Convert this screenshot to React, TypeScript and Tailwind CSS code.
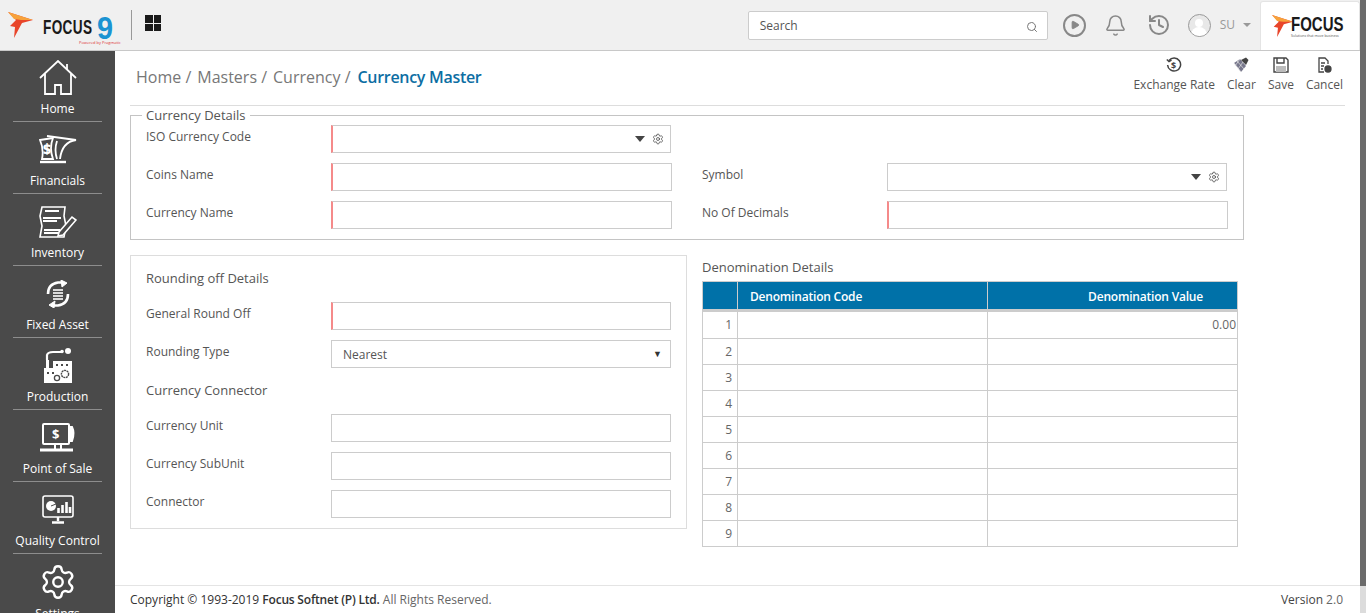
import { Bell, History, Search, Settings, Play } from "lucide-react";

const font = "font-['Open_Sans','Noto_Sans',sans-serif]";

function Logo({ className }: { className?: string }) {
  return (
    <svg viewBox="0 0 26 28" className={className}>
      <path d="M0 1 L25 9 L14 12 L6 27 L7 16 L2 15 L8 9 Z" fill="#e8452a" />
      <path d="M0 1 L25 9 L13 9 L6 8 Z" fill="#f7a23b" />
    </svg>
  );
}

function HomeIcon() {
  return (
    <svg viewBox="0 0 38 36" className="w-[38px] h-[36px]" fill="none" stroke="#fff" strokeWidth="1.8">
      <path d="M1 18 L19 1 L37 18" />
      <path d="M6 14 V34 H16 V25 H22 V34 H32 V14" />
      <path d="M28 4 V10" />
    </svg>
  );
}

function FinancialsIcon() {
  return (
    <svg viewBox="0 0 38 30" className="w-[38px] h-[30px]" fill="none" stroke="#fff" strokeWidth="1.8">
      <path d="M1 5 L14 3 Q10 13 14 24 H3 Q5 14 1 5 Z" />
      <path d="M8 1 L37 5 Q23 7 21 24" />
      <path d="M18 6 Q15 15 18 24" />
      <path d="M1 27 H27" strokeWidth="2.4" />
      <text x="4" y="19" fontSize="14" fontWeight="800" fill="#fff" stroke="none" fontFamily="Open Sans">$</text>
    </svg>
  );
}

function InventoryIcon() {
  return (
    <svg viewBox="0 0 38 32" className="w-[38px] h-[32px]" fill="none" stroke="#fff" strokeWidth="1.6">
      <path d="M3 1 H26 L25 10 L27 20 L25 31 H1 L3 20 L1 10 Z" />
      <path d="M6 5 H20 M4 12 H22 M4 15 H18 M5 24 H21 M5 27 H21" strokeWidth="2" />
      <path d="M20 26 L33 11 L37 14 L24 29 L19 30 Z" fill="#4a4a4a" />
    </svg>
  );
}

function FixedAssetIcon() {
  return (
    <svg viewBox="0 0 24 28" className="w-[24px] h-[28px]" fill="none" stroke="#fff" strokeWidth="2.6">
      <path d="M2 14 Q2 4 12 2.5 L17 2.5" />
      <path d="M15 0 L21 3 L16 7 Z" fill="#fff" strokeWidth="1" />
      <path d="M22 14 Q22 24 12 25.5 L7 25.5" />
      <path d="M9 21 L3 25 L8 28 Z" fill="#fff" strokeWidth="1" />
      <path d="M7 10 H17 M7 13 H17 M7 16 H17 M7 19 H17" strokeWidth="2" stroke="#d8d8d8" />
    </svg>
  );
}

function ProductionIcon() {
  return (
    <svg viewBox="0 0 30 36" className="w-[30px] h-[36px]" fill="none" stroke="#fff" strokeWidth="1.6">
      <path d="M1 20 H3 V12 H6 V20 H10 V13 H29 V35 H1 Z" fill="#fff" stroke="none" />
      <path d="M4 12 V7 Q5 4 10 4 H18" strokeWidth="2.2" />
      <circle cx="19" cy="3.5" r="1.8" fill="#fff" stroke="none" />
      <circle cx="25" cy="3" r="3" fill="#fff" stroke="none" />
      <path d="M13 17 H15 M18 17 H20 M23 17 H25 M4 25 H6 M9 25 H11" stroke="#4a4a4a" strokeWidth="2" />
      <circle cx="14" cy="30" r="2.6" stroke="#4a4a4a" strokeWidth="1.3" />
      <circle cx="22" cy="26" r="3.6" stroke="#4a4a4a" strokeWidth="1.4" strokeDasharray="2 0.6" />
    </svg>
  );
}

function PosIcon() {
  return (
    <svg viewBox="0 0 38 30" className="w-[38px] h-[30px]" fill="none" stroke="#fff" strokeWidth="2">
      <rect x="4" y="1" width="26" height="20" rx="1" />
      <path d="M30 4 H33 Q36 10 33 18 H30" fill="#fff" />
      <path d="M16 21 V26 M22 21 V26" />
      <path d="M1 27 H34" strokeWidth="3" />
      <text x="13" y="16" fontSize="13" fontWeight="700" fill="#fff" stroke="none" fontFamily="Open Sans">$</text>
    </svg>
  );
}

function QualityIcon() {
  return (
    <svg viewBox="0 0 32 29" className="w-[32px] h-[29px]" fill="none" stroke="#fff" strokeWidth="1.6">
      <rect x="1" y="1" width="30" height="21" rx="2" />
      <circle cx="9" cy="11" r="5" fill="#fff" stroke="none" />
      <path d="M9 11 L14 9" stroke="#4a4a4a" strokeWidth="1" />
      <path d="M16.5 18 V13 M20.5 18 V10 M24.5 18 V7 M28 18 V12" strokeWidth="2.6" />
      <path d="M16 22 V26 M10 27.5 H22" strokeWidth="2.4" />
    </svg>
  );
}

const navItems = [
  { label: "Home", icon: <HomeIcon /> },
  { label: "Financials", icon: <FinancialsIcon /> },
  { label: "Inventory", icon: <InventoryIcon /> },
  { label: "Fixed Asset", icon: <FixedAssetIcon /> },
  { label: "Production", icon: <ProductionIcon /> },
  { label: "Point of Sale", icon: <PosIcon /> },
  { label: "Quality Control", icon: <QualityIcon /> },
  { label: "Settings", icon: <Settings className="w-[38px] h-[38px] text-white" strokeWidth={1.5} /> },
];

function Label({ children }: { children: string }) {
  return <div className="w-[185px] shrink-0 mt-[3px] text-[12px] leading-[17px] text-[#555] self-start">{children}</div>;
}

function Field({ required, w = "w-[341px]", picker }: { required?: boolean; w?: string; picker?: boolean }) {
  return (
    <div
      className={`${w} h-[28px] bg-white border border-[#ccc] flex items-center justify-end pr-[6px] gap-[7px] ${required ? "border-l-2 border-l-[#f58a8a]" : ""}`}
    >
      {picker && (
        <>
          <div className="w-0 h-0 border-l-[5.5px] border-r-[5.5px] border-t-[6px] border-l-transparent border-r-transparent border-t-[#444]" />
          <Settings className="w-[12px] h-[12px] text-[#444]" strokeWidth={1.5} />
        </>
      )}
    </div>
  );
}

function Toolbar() {
  const cls = "w-[16px] h-[16px] text-[#444]";
  return (
    <div className="flex gap-[12px] text-[12px] leading-[16px] text-[#555] pr-[2px]">
      <div className="flex flex-col items-center gap-[4px]">
        <svg viewBox="0 0 16 16" className={cls} fill="none" stroke="currentColor" strokeWidth="1.5">
          <path d="M3 3.5 A6.5 6.5 0 1 1 1.6 8" />
          <path d="M0.8 2.5 L3 4.5 L5.5 3" />
          <text x="5" y="11.5" fontSize="9" fontWeight="700" fill="currentColor" stroke="none" fontFamily="Open Sans">$</text>
        </svg>
        <span>Exchange Rate</span>
      </div>
      <div className="flex flex-col items-center gap-[4px]">
        <svg viewBox="0 0 16 16" className={cls}>
          <path d="M1 6 L7 2 L13 9 L8 15 Z" fill="#77778c" />
          <path d="M1 6 L8 15 M4 4 L11 12 M7 2 L2 9 M10 5 L5 12" stroke="#e4e4e4" strokeWidth="0.7" />
          <path d="M8 3 L13 0.5 L15.5 3 L13 8 Z" fill="#444" />
        </svg>
        <span>Clear</span>
      </div>
      <div className="flex flex-col items-center gap-[4px]">
        <svg viewBox="0 0 16 16" className={cls} fill="none" stroke="currentColor" strokeWidth="1.4">
          <path d="M1 1 H13 L15 3 V15 H1 Z" />
          <path d="M4 1 V6 H11 V1" />
          <path d="M3 9 H13 V15 H3 Z" fill="#bbb" stroke="none" />
        </svg>
        <span>Save</span>
      </div>
      <div className="flex flex-col items-center gap-[4px]">
        <svg viewBox="0 0 16 16" className={cls} fill="none" stroke="currentColor" strokeWidth="1.3">
          <path d="M8 15 H3 V1 H9 L12 4 V7" />
          <path d="M5 6 H9 M5 9 H8 M5 12 H7" />
          <circle cx="12" cy="12" r="3" fill="currentColor" />
        </svg>
        <span>Cancel</span>
      </div>
    </div>
  );
}

export default function App() {
  return (
    <div className={`${font} w-[1366px] h-[613px] overflow-hidden flex bg-white`}>
      <div className="w-[1360px] h-full flex flex-col">
        {/* Top bar */}
        <header className="h-[51px] shrink-0 bg-[#f0f0f0] border-b border-[#c8c8c8] flex items-center">
          <Logo className="w-[26px] h-[28px] ml-[8px]" />
          <div className="ml-[9px] w-[88px] h-[40px] relative flex items-center">
            <span className="mt-[4px] font-['Liberation_Sans',sans-serif] font-bold text-[20px] leading-none tracking-[0.5px] text-[#1a1a1a] scale-x-[0.68] origin-left inline-block w-[54px]">FOCUS</span>
            <span className="mt-[6px] h-[24px] font-['Liberation_Sans',sans-serif] text-[32px] leading-[24px] font-bold text-[#1b93d2] scale-x-90 origin-left">9</span>
            <span className="absolute left-[36px] top-[35px] text-[4px] leading-[5px] text-[#d33] whitespace-nowrap">Powered by Pragmatic</span>
          </div>
          <div className="w-px h-[30px] bg-[#999]" />
          <div className="ml-[13px] grid grid-cols-2 gap-[1px] w-[16px] mb-[4px]">
            <div className="h-[7.5px] bg-[#1a1a1a]" />
            <div className="h-[7.5px] bg-[#1a1a1a]" />
            <div className="h-[7.5px] bg-[#1a1a1a]" />
            <div className="h-[7.5px] bg-[#1a1a1a]" />
          </div>
          <div className="ml-auto flex items-center">
            <div className="w-[300px] h-[29px] bg-white border border-[#ccc] rounded-[2px] flex items-center justify-between pl-[11px] pr-[9px] text-[12px] text-[#555]">
              <span className="mt-[1px]">Search</span>
              <Search className="w-[12px] h-[12px] text-[#777] mt-[3px]" />
            </div>
            <div className="ml-[15px] w-[23px] h-[23px] rounded-full border-2 border-[#888] flex items-center justify-center">
              <Play className="w-[10px] h-[10px] ml-[1px] text-[#888] fill-[#888]" />
            </div>
            <Bell className="ml-[18px] w-[23px] h-[23px] text-[#888]" strokeWidth={1.6} />
            <History className="ml-[20px] w-[24px] h-[24px] text-[#888]" strokeWidth={2} />
            <div className="ml-[17px] w-[23px] h-[23px] rounded-full border border-[#999] bg-[#e8e8e8] overflow-hidden flex flex-col items-center">
              <div className="mt-[4px] w-[8px] h-[10px] rounded-full bg-white" />
              <div className="w-[16px] h-[10px] rounded-t-full bg-white" />
            </div>
            <span className="ml-[9px] text-[12px] text-[#999]">SU</span>
            <div className="ml-[8px] w-0 h-0 border-l-[4px] border-r-[4px] border-t-[4px] border-l-transparent border-r-transparent border-t-[#999]" />
            <div className="ml-[9px] w-[100px] h-[49px] mt-[1px] bg-white rounded-t-[3px] border border-b-0 border-[#e4e4e4] flex items-center pl-[11px]">
              <Logo className="w-[22px] h-[24px] shrink-0" />
              <div className="flex flex-col -ml-[3px]">
                <span className="font-['Liberation_Sans',sans-serif] font-bold text-[20px] leading-[20px] text-[#1a1a1a] scale-x-75 origin-left inline-block w-[56px]">FOCUS</span>
                <span className="text-[3.5px] leading-[4px] text-[#555] whitespace-nowrap">Solutions that move business</span>
              </div>
            </div>
          </div>
        </header>

        <div className="flex flex-1 min-h-0">
          {/* Sidebar */}
          <nav className="w-[115px] shrink-0 bg-[#4a4a4a] overflow-hidden">
            {navItems.map((item, i) => (
              <div key={item.label} className="h-[72px] first:h-[71px] mx-[13px] border-b border-[#8d8d8d] flex flex-col items-center justify-end text-white text-[12px] leading-[17px] pb-[4px] last:border-b-0">
                <div className="flex-1 flex items-center justify-center pt-[5px]">{item.icon}</div>
                <span className={i === 7 ? "mt-[1px]" : ""}>{item.label}</span>
              </div>
            ))}
          </nav>

          {/* Main */}
          <main className="flex-1 min-w-0 flex flex-col">
            <div className="flex-1 min-h-0 pl-[15px] pr-[15px]">
              <div className="h-[55px] border-b border-[#ddd] flex items-start justify-between pt-[6px]">
                <div className="pl-[6px] pt-[9px] text-[16px] leading-[22px] text-[#777] flex gap-[6px]">
                  <span>Home /</span>
                  <span>Masters /</span>
                  <span>Currency /</span>
                  <span className="ml-[1px] font-semibold tracking-[-0.3px] text-[#0d6ea3]">Currency Master</span>
                </div>
                <Toolbar />
              </div>

              {/* Currency details */}
              <fieldset className="w-[1114px] h-[134px] border border-[#c4c4c4] pl-[15px] relative block">
                <legend className="px-[4px] -ml-[4px] text-[13px] leading-[18px] text-[#555]">Currency Details</legend>
                <div className="flex items-start h-[28px] mt-[1px]">
                  <Label>ISO Currency Code</Label>
                  <Field required picker w="w-[340px]" />
                </div>
                <div className="flex items-start mt-[10px]">
                  <Label>Coins Name</Label>
                  <Field required />
                  <div className="w-[30px]" />
                  <Label>Symbol</Label>
                  <Field picker w="w-[340px]" />
                </div>
                <div className="flex items-start mt-[10px]">
                  <Label>Currency Name</Label>
                  <Field required />
                  <div className="w-[30px]" />
                  <Label>No Of Decimals</Label>
                  <Field required />
                </div>
              </fieldset>

              <div className="flex mt-[15px]">
                {/* Rounding off */}
                <div className="w-[557px] h-[274px] border border-[#ddd] pl-[15px] pt-[13px]">
                  <div className="text-[13px] leading-[18px] text-[#555]">Rounding off Details</div>
                  <div className="flex items-start mt-[15px]">
                    <Label>General Round Off</Label>
                    <Field required w="w-[340px]" />
                  </div>
                  <div className="flex items-start mt-[10px]">
                    <Label>Rounding Type</Label>
                    <div className="w-[340px] h-[28px] border border-[#ccc] bg-white flex items-center justify-between pl-[11px] pr-[8px] text-[12px] text-[#555]">
                      <span className="mt-[1px]">Nearest</span>
                      <span className="text-[9px] text-[#333]">▼</span>
                    </div>
                  </div>
                  <div className="text-[13px] leading-[18px] text-[#555] mt-[13px]">Currency Connector</div>
                  <div className="flex items-start mt-[15px]">
                    <Label>Currency Unit</Label>
                    <Field w="w-[340px]" />
                  </div>
                  <div className="flex items-start mt-[10px]">
                    <Label>Currency SubUnit</Label>
                    <Field w="w-[340px]" />
                  </div>
                  <div className="flex items-start mt-[10px]">
                    <Label>Connector</Label>
                    <Field w="w-[340px]" />
                  </div>
                </div>

                {/* Denomination */}
                <div className="ml-[15px] w-[536px]">
                  <div className="text-[13px] leading-[18px] text-[#555] mt-[3px] mb-[5px]">Denomination Details</div>
                  <table className="w-[536px] table-fixed border-collapse text-[12px]">
                    <thead>
                      <tr className="h-[29px] bg-[#0071a8] text-white">
                        <th className="w-[35px] border border-[#ccc] border-b-[3px]" />
                        <th className="w-[250px] border border-[#ccc] border-b-[3px] text-left pl-[12px] pt-[2px] font-semibold tracking-[-0.2px]">Denomination Code</th>
                        <th className="border border-[#ccc] border-b-[3px] text-right pr-[34px] pt-[2px] font-semibold tracking-[-0.2px]">Denomination Value</th>
                      </tr>
                    </thead>
                    <tbody>
                      {[1, 2, 3, 4, 5, 6, 7, 8, 9].map((n) => (
                        <tr key={n} className="h-[26px]">
                          <td className="border border-[#ccc] text-right pr-[5px] text-[#666]">{n}</td>
                          <td className="border border-[#ccc]" />
                          <td className="border border-[#ccc] text-right pr-[1px] text-[#666] align-top leading-[26px]">{n === 1 ? "0.00" : ""}</td>
                        </tr>
                      ))}
                    </tbody>
                  </table>
                </div>
              </div>
            </div>

            {/* Footer */}
            <footer className="h-[28px] shrink-0 border-t border-[#e4e4e4] pl-[15px] pr-[17px] flex items-center justify-between text-[12px] text-[#666]">
              <div>
                <span className="text-[#333]">Copyright © 1993-2019 </span>
                <span className="font-semibold tracking-[-0.2px] text-[#333]">Focus Softnet (P) Ltd.</span> All Rights Reserved.
              </div>
              <div>
                <span className="font-medium text-[#444]">Version</span> 2.0
              </div>
            </footer>
          </main>
        </div>
      </div>

      {/* Page scrollbar */}
      <div className="w-[6px] h-full flex flex-col">
        <div className="flex-1 bg-[#6b6b6b]" />
        <div className="h-[27px] bg-[#dcdcdc]" />
      </div>
    </div>
  );
}
